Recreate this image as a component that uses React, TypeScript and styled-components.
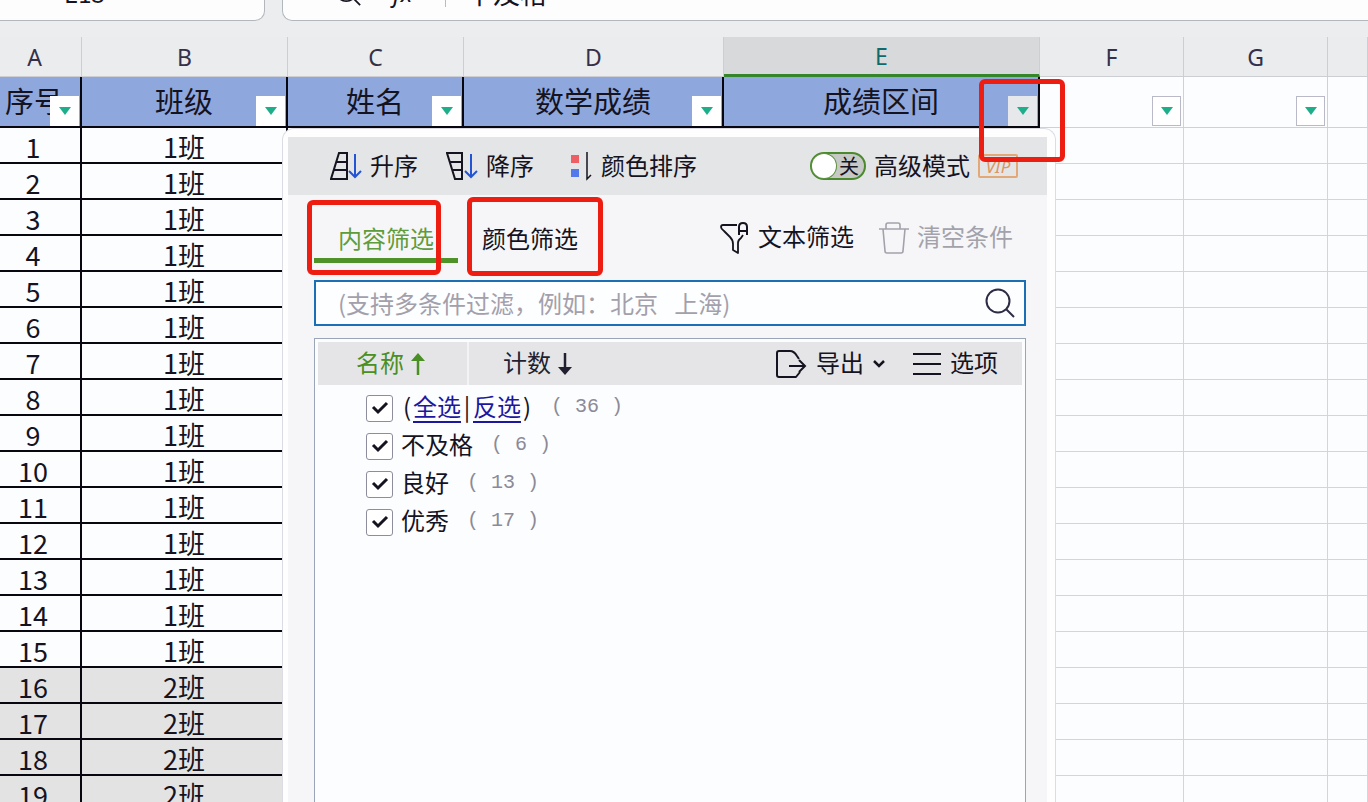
import React from "react";
import styled, { createGlobalStyle, css } from "styled-components";

const cjk = '"Noto Sans CJK SC", "Liberation Sans", sans-serif';
const ink = "#15131f";
const green = "#4f9328";

const GlobalStyle = createGlobalStyle`
  *, *::before, *::after { box-sizing: border-box; }
  body { margin: 0; background: #fcfdff; color: ${ink}; font-family: ${cjk}; }
  button, input { font: inherit; color: inherit; }
  button { background: none; border: 0; padding: 0; cursor: pointer; }
`;

const Page = styled.div`
  display: flex;
  flex-direction: column;
  height: 100vh;
  overflow: hidden;
`;

/* ---------- formula bar ---------- */

const FormulaBar = styled.header`
  display: flex;
  align-items: flex-end;
  gap: 17px;
  flex: none;
  height: 37px;
  padding-bottom: 16px;
  overflow: hidden;
  background: #ecedef;
`;

const Field = styled.div<{ $side: "left" | "right" }>`
  display: flex;
  align-items: center;
  flex: ${(p) => (p.$side === "left" ? "0 0 265px" : "1")};
  min-width: 0;
  height: 56px;
  padding: ${(p) => (p.$side === "left" ? "0 20px 0 64px" : "0 0 0 52px")};
  background: #fdfdfe;
  border: 1px solid #b3b7bc;
  border-width: ${(p) => (p.$side === "left" ? "1px 1px 1px 0" : "1px 0 1px 1px")};
  border-radius: ${(p) => (p.$side === "left" ? "0 10px 10px 0" : "10px 0 0 10px")};
`;

const BarInput = styled.input<{ $size: number }>`
  flex: 1;
  min-width: 0;
  padding: 0;
  border: 0;
  outline: 0;
  background: none;
  font-size: ${(p) => p.$size}px;
  line-height: 32px;
`;

const Fx = styled.button`
  width: 60px;
  height: 32px;
  margin-left: 24px;
  text-align: left;
  padding-left: 8px;
  font: italic 24px/28px "Noto Sans", sans-serif;
`;

const BarRule = styled.span`
  width: 1px;
  height: 28px;
  margin-right: 20px;
  background: #b9bcc2;
`;

/* ---------- sheet ---------- */

const Sheet = styled.main`
  position: relative;
  flex: 1;
  min-height: 0;
  overflow: hidden;
`;

const Grid = styled.table`
  width: 100%;
  table-layout: fixed;
  border-collapse: separate;
  border-spacing: 0;
`;

const Col = styled.col<{ $w?: number }>`
  width: ${(p) => (p.$w ? `${p.$w}px` : "auto")};
`;

const Letter = styled.th<{ $selected?: boolean; $first?: boolean }>`
  height: 40px;
  padding: 0 ${(p) => (p.$first ? 12 : 0)}px 0 0;
  font: 400 23px/34px "Noto Sans", sans-serif;
  color: #34304a;
  background: #ebecee;
  border-right: 1px solid #cdced3;
  border-bottom: 1px solid #cdced3;
  ${(p) =>
    p.$selected &&
    css`
      color: #11696a;
      background: #d8d9da;
      border-bottom: 3px solid #35852b;
    `}
`;

const Heading = styled.th<{ $filled: boolean; $first?: boolean }>`
  position: relative;
  height: 51px;
  padding: 0 ${(p) => (p.$first ? 12 : 0)}px 3px 0;
  font-size: 29px;
  line-height: 44px;
  font-weight: 400;
  white-space: nowrap;
  background: ${(p) => (p.$filled ? "#8ea8de" : "transparent")};
  border: solid ${(p) => (p.$filled ? "#08060e" : "#cfd1da")};
  border-width: ${(p) => (p.$filled ? "0 2px 2px 0" : "0 1px 1px 0")};
`;

const FilterButton = styled.button<{ $look: "plain" | "open" | "outlined" }>`
  position: absolute;
  right: ${(p) => (p.$look === "outlined" ? 2 : 1)}px;
  bottom: ${(p) => (p.$look === "outlined" ? 1 : 0)}px;
  display: grid;
  place-items: center;
  width: 29px;
  height: 30px;
  background: ${(p) => (p.$look === "open" ? "#e6e8ec" : "#fff")};
  border: 1px solid ${(p) => (p.$look === "outlined" ? "#b9b9c8" : "transparent")};
`;

const Cell = styled.td<{ $boxed: boolean; $shade?: boolean; $first?: boolean }>`
  height: 36px;
  padding: 4px ${(p) => (p.$first ? 14 : 0)}px 0 0;
  font-size: 27px;
  line-height: 30px;
  text-align: center;
  background: ${(p) => (p.$shade ? "#e3e3e4" : "transparent")};
  border: solid ${(p) => (p.$boxed ? "#08060e" : "#d3d5dc")};
  border-width: ${(p) => (p.$boxed ? "0 2px 2px 0" : "0 1px 1px 0")};
`;

/* ---------- filter panel ---------- */

const Panel = styled.section`
  position: absolute;
  top: 91px;
  bottom: 0;
  left: 282px;
  display: flex;
  flex-direction: column;
  width: 774px;
  padding: 8px 8px 0 5px;
  background: #fefefe;
  border: 1px solid #dcdde4;
  border-bottom: 0;
  border-radius: 12px 12px 0 0;
  font-size: 24px;
  line-height: 28px;
`;

const Toolbar = styled.div`
  display: flex;
  align-items: center;
  flex: none;
  height: 58px;
  padding: 0 29px 0 42px;
  background: #e4e5e6;
`;

const Tool = styled.button<{ $before?: number; $gap?: number; $muted?: boolean }>`
  display: flex;
  align-items: center;
  gap: ${(p) => p.$gap ?? 8}px;
  margin-left: ${(p) => p.$before ?? 0}px;
  white-space: nowrap;
  color: ${(p) => (p.$muted ? "#a3a2ab" : ink)};
`;

const Caption = styled.span`
  padding-bottom: 3px;
`;

const Icon = styled.svg`
  display: block;
  flex: none;
  fill: none;
  stroke: currentColor;
  stroke-width: 2;
`;

const Spacer = styled.span`
  flex: 1;
`;

const Switch = styled.label`
  display: flex;
  align-items: center;
  gap: 8px;
  cursor: pointer;
`;

const Track = styled.span`
  display: grid;
  align-items: center;
  width: 56px;
  height: 28px;
  padding-right: 5px;
  border: 2px solid #4b8a2c;
  border-radius: 14px;
  background: #c6c9c6;
  font-size: 20px;
  line-height: 24px;
  text-align: right;
`;

const TrackText = styled.span`
  grid-area: 1 / 1;
`;

const Knob = styled.input`
  grid-area: 1 / 1;
  appearance: none;
  width: 24px;
  height: 24px;
  margin: 0;
  border-radius: 50%;
  background: #fff;
  box-shadow: 0 0 0 1px #5d9142;
`;

const Vip = styled.span`
  width: 40px;
  height: 24px;
  margin-left: 8px;
  border: 2px solid #e3a878;
  border-radius: 2px;
  color: #dc9660;
  font: italic 17px/21px "Noto Sans", sans-serif;
  text-align: center;
`;

const Body = styled.div`
  display: flex;
  flex-direction: column;
  flex: 1;
  min-height: 0;
  padding: 0 21px 0 26px;
  background: #f6f6f8;
`;

const TabRow = styled.div`
  display: flex;
  align-items: center;
  flex: none;
  height: 85px;
  padding-right: 13px;
`;

const Tab = styled.button<{ $active?: boolean }>`
  position: relative;
  width: 144px;
  height: 50px;
  padding-top: 5px;
  color: ${(p) => (p.$active ? "#5f9c3c" : ink)};
  border-bottom: 5px solid ${(p) => (p.$active ? green : "transparent")};
`;

const Mark = styled.span<{ $top: number; $left: number; $w: number; $h: number }>`
  position: absolute;
  z-index: 1;
  top: ${(p) => p.$top}px;
  left: ${(p) => p.$left}px;
  width: ${(p) => p.$w}px;
  height: ${(p) => p.$h}px;
  border: 5px solid #ee1d12;
  border-radius: 6px;
  pointer-events: none;
`;

const SearchBox = styled.label`
  display: flex;
  align-items: center;
  flex: none;
  height: 46px;
  padding: 0 9px 0 22px;
  background: #fdfeff;
  border: 2px solid #1b6fb5;
  color: #2f2b45;
`;

const SearchInput = styled.input`
  flex: 1;
  min-width: 0;
  padding: 0;
  border: 0;
  outline: 0;
  background: none;
  line-height: 32px;
  &::placeholder {
    color: #a3a0ab;
    opacity: 1;
  }
`;

const List = styled.div`
  display: flex;
  flex-direction: column;
  flex: 1;
  min-height: 0;
  margin-top: 12px;
  padding: 3px;
  background: #fcfdfe;
  border: 1px solid #9aa5ba;
  border-bottom: 0;
`;

const ListHead = styled.div`
  display: flex;
  align-items: center;
  flex: none;
  height: 43px;
  padding-right: 24px;
  background: #e5e5e7;
`;

const SortHead = styled.button<{ $active?: boolean }>`
  display: flex;
  align-items: center;
  gap: 7px;
  height: 43px;
  padding-left: ${(p) => (p.$active ? 38 : 34)}px;
  width: ${(p) => (p.$active ? 151 : 120)}px;
  color: ${(p) => (p.$active ? "#4a8f23" : "#221f30")};
  border-right: ${(p) => (p.$active ? "2px solid #f3f3f5" : "0")};
`;

const Options = styled.ul`
  margin: 0;
  padding: 4px 0 0 48px;
  list-style: none;
`;

const Option = styled.li`
  display: flex;
  align-items: center;
  height: 38px;
  white-space: nowrap;
`;

const OptionText = styled.span`
  padding-bottom: 4px;
`;

const Check = styled.span`
  display: grid;
  place-items: center;
  width: 27px;
  height: 27px;
  margin-right: 8px;
`;

const CheckInput = styled.input`
  grid-area: 1 / 1;
  appearance: none;
  width: 27px;
  height: 27px;
  margin: 0;
  background: #fff;
  border: 1px solid #8d8d9d;
  border-radius: 3px;
`;

const CheckMark = styled(Icon)`
  grid-area: 1 / 1;
  z-index: 1;
  pointer-events: none;
  stroke-width: 3;
`;

const PickLink = styled.a`
  color: #1b17a0;
  text-decoration: underline;
  text-decoration-thickness: 2px;
  text-underline-offset: 5px;
`;

const Punct = styled.span`
  display: inline-block;
  width: 12px;
  text-align: center;
`;

const Count = styled.span`
  margin-left: 18px;
  padding-bottom: 2px;
  color: #8d8a97;
  font-family: "Liberation Mono", monospace;
  font-size: 20px;
`;

/* ---------- icons ---------- */

const SearchIcon = ({ size }: { size: number }) => (
  <Icon width={size} height={size} viewBox="0 0 30 30" aria-hidden>
    <circle cx="13" cy="13" r="11.5" />
    <path d="M21 21l8 8" />
  </Icon>
);

const AscIcon = () => (
  <Icon width="32" height="30" viewBox="0 0 32 30" aria-hidden>
    <path d="M9 2h8v26H1zM6 11h11M4 19h13" />
    <path stroke="#2454d6" d="M25 3v23M19 20l6 6 6-6" />
  </Icon>
);

const DescIcon = () => (
  <Icon width="32" height="30" viewBox="0 0 32 30" aria-hidden>
    <path d="M1 2h15v26H9zM4 11h12M6 19h10" />
    <path stroke="#2454d6" d="M25 3v23M19 20l6 6 6-6" />
  </Icon>
);

const ColorSortIcon = () => (
  <Icon width="22" height="30" viewBox="0 0 22 30" aria-hidden>
    <path stroke="none" fill="#ee5f63" d="M0 4h8v8H0z" />
    <path stroke="none" fill="#5479ea" d="M0 18h8v8H0z" />
    <path strokeWidth="1.5" d="M16 1v27l4-4" />
  </Icon>
);

const FunnelIcon = () => (
  <Icon width="30" height="34" viewBox="0 0 30 34" aria-hidden>
    <path
      strokeWidth="1.8"
      strokeLinejoin="round"
      d="M17 4H3Q1 4 1 6t3 4l6 6q3 3 3 7v6l5 3V22q0-3 3-5l2-3"
    />
    <path d="M19 14V6q0-4 4-4t4 4v8M19 10h8" />
  </Icon>
);

const TrashIcon = () => (
  <Icon width="30" height="34" viewBox="0 0 30 34" aria-hidden>
    <path strokeWidth="1.6" d="M0 8h30M7 8V4q0-2 2-2h10q2 0 2 2v4M4 8l2 22q0 2 2 2h14q2 0 2-2l2-22" />
  </Icon>
);

const ExportIcon = () => (
  <Icon width="32" height="30" viewBox="0 0 32 30" aria-hidden>
    <path d="M24 10l-2-3q-3-5-7-5H4Q2 2 2 4v22q0 2 2 2h17l4-5" strokeLinejoin="round" />
    <path d="M14 17h16M24 11l6 6-6 6" />
  </Icon>
);

const MenuIcon = () => (
  <Icon width="28" height="24" viewBox="0 0 28 24" aria-hidden>
    <path d="M0 2h28M0 12h28M0 22h28" />
  </Icon>
);

const ChevronIcon = () => (
  <Icon width="12" height="10" viewBox="0 0 12 10" aria-hidden>
    <path strokeWidth="2.5" d="M1 2l5 5 5-5" />
  </Icon>
);

const ArrowUp = () => (
  <Icon width="14" height="22" viewBox="0 0 14 22" aria-hidden>
    <path strokeWidth="2.5" d="M7 5v17" />
    <path stroke="none" fill="currentColor" d="M7 0l7 8H0z" />
  </Icon>
);

const ArrowDown = () => (
  <Icon width="14" height="22" viewBox="0 0 14 22" aria-hidden>
    <path strokeWidth="2.5" d="M7 0v17" />
    <path stroke="none" fill="currentColor" d="M7 22l7-8H0z" />
  </Icon>
);

const Caret = () => (
  <svg width="12" height="8" viewBox="0 0 12 8" aria-hidden>
    <path fill="#1fae8c" d="M0 0h12L6 8z" />
  </svg>
);

/* ---------- data ---------- */

const columns: { letter: string; width?: number; title?: string; filter?: "plain" | "open" | "outlined" }[] = [
  { letter: "A", width: 82, title: "序号", filter: "plain" },
  { letter: "B", width: 206, title: "班级", filter: "plain" },
  { letter: "C", width: 176, title: "姓名", filter: "plain" },
  { letter: "D", width: 260, title: "数学成绩", filter: "plain" },
  { letter: "E", width: 316, title: "成绩区间", filter: "open" },
  { letter: "F", width: 144, filter: "outlined" },
  { letter: "G", width: 144, filter: "outlined" },
  { letter: "" },
];

const rows = Array.from({ length: 19 }, (_, i) => ({
  id: i + 1,
  group: i < 15 ? "1班" : "2班",
  shade: i >= 15,
}));

const options = [
  { name: "不及格", count: 6 },
  { name: "良好", count: 13 },
  { name: "优秀", count: 17 },
];

const Tick = ({ id, label }: { id: string; label?: string }) => (
  <Check>
    <CheckInput type="checkbox" id={id} aria-label={label} defaultChecked />
    <CheckMark width="18" height="14" viewBox="0 0 18 14" aria-hidden>
      <path d="M2 6l5 5 9-9" />
    </CheckMark>
  </Check>
);

export default function App() {
  return (
    <Page>
      <GlobalStyle />
      <FormulaBar>
        <Field $side="left">
          <BarInput $size={24} defaultValue="E13" aria-label="名称框" />
        </Field>
        <Field $side="right">
          <SearchIcon size={26} />
          <Fx type="button">fx</Fx>
          <BarRule />
          <BarInput $size={27} defaultValue="不及格" aria-label="编辑栏" />
        </Field>
      </FormulaBar>

      <Sheet>
        <Grid>
          <colgroup>
            {columns.map((c) => (
              <Col key={c.letter} $w={c.width} />
            ))}
          </colgroup>
          <thead>
            <tr>
              {columns.map((c) => (
                <Letter key={c.letter} $selected={c.letter === "E"} $first={c.letter === "A"}>
                  {c.letter}
                </Letter>
              ))}
            </tr>
            <tr>
              {columns.map((c) => (
                <Heading key={c.letter} $filled={!!c.title} $first={c.letter === "A"}>
                  {c.title}
                  {c.filter && (
                    <FilterButton type="button" $look={c.filter} aria-label="筛选">
                      <Caret />
                    </FilterButton>
                  )}
                </Heading>
              ))}
            </tr>
          </thead>
          <tbody>
            {rows.map((r) => (
              <tr key={r.id}>
                {columns.map((c, i) => (
                  <Cell key={c.letter} $boxed={i < 5} $shade={r.shade && i < 5} $first={i === 0}>
                    {i === 0 ? r.id : i === 1 ? r.group : null}
                  </Cell>
                ))}
              </tr>
            ))}
          </tbody>
        </Grid>

        <Panel>
          <Toolbar>
            <Tool type="button">
              <AscIcon />
              <Caption>升序</Caption>
            </Tool>
            <Tool type="button" $before={28}>
              <DescIcon />
              <Caption>降序</Caption>
            </Tool>
            <Tool type="button" $before={37}>
              <ColorSortIcon />
              <Caption>颜色排序</Caption>
            </Tool>
            <Spacer />
            <Switch>
              <Track>
                <TrackText>关</TrackText>
                <Knob type="checkbox" role="switch" />
              </Track>
              <Caption>高级模式</Caption>
            </Switch>
            <Vip>VIP</Vip>
          </Toolbar>

          <Body>
            <TabRow>
              <Tab type="button" $active>
                内容筛选
                <Mark $top={-13} $left={-7} $w={134} $h={75} />
              </Tab>
              <Tab type="button">
                颜色筛选
                <Mark $top={-16} $left={9} $w={136} $h={79} />
              </Tab>
              <Spacer />
              <Tool type="button">
                <FunnelIcon />
                <Caption>文本筛选</Caption>
              </Tool>
              <Tool type="button" $before={25} $muted>
                <TrashIcon />
                <Caption>清空条件</Caption>
              </Tool>
            </TabRow>

            <SearchBox>
              <SearchInput type="text" aria-label="搜索" placeholder="(支持多条件过滤，例如：北京   上海)" />
              <SearchIcon size={30} />
            </SearchBox>

            <List>
              <ListHead>
                <SortHead type="button" $active>
                  <Caption>名称</Caption>
                  <ArrowUp />
                </SortHead>
                <SortHead type="button">
                  <Caption>计数</Caption>
                  <ArrowDown />
                </SortHead>
                <Spacer />
                <Tool type="button" $gap={9}>
                  <ExportIcon />
                  <Caption>导出</Caption>
                  <ChevronIcon />
                </Tool>
                <Tool type="button" $before={28} $gap={9}>
                  <MenuIcon />
                  <Caption>选项</Caption>
                </Tool>
              </ListHead>
              <Options>
                <Option>
                  <Tick id="opt-all" label="全选" />
                  <OptionText>
                    <Punct>(</Punct>
                    <PickLink href="#all">全选</PickLink>
                    <Punct>|</Punct>
                    <PickLink href="#invert">反选</PickLink>
                    <Punct>)</Punct>
                  </OptionText>
                  <Count>( 36 )</Count>
                </Option>
                {options.map((o) => (
                  <Option key={o.name}>
                    <Tick id={`opt-${o.count}`} />
                    <OptionText as="label" htmlFor={`opt-${o.count}`}>
                      {o.name}
                    </OptionText>
                    <Count>( {o.count} )</Count>
                  </Option>
                ))}
              </Options>
            </List>
          </Body>
        </Panel>

        <Mark $top={42} $left={979} $w={86} $h={83} />
      </Sheet>
    </Page>
  );
}
